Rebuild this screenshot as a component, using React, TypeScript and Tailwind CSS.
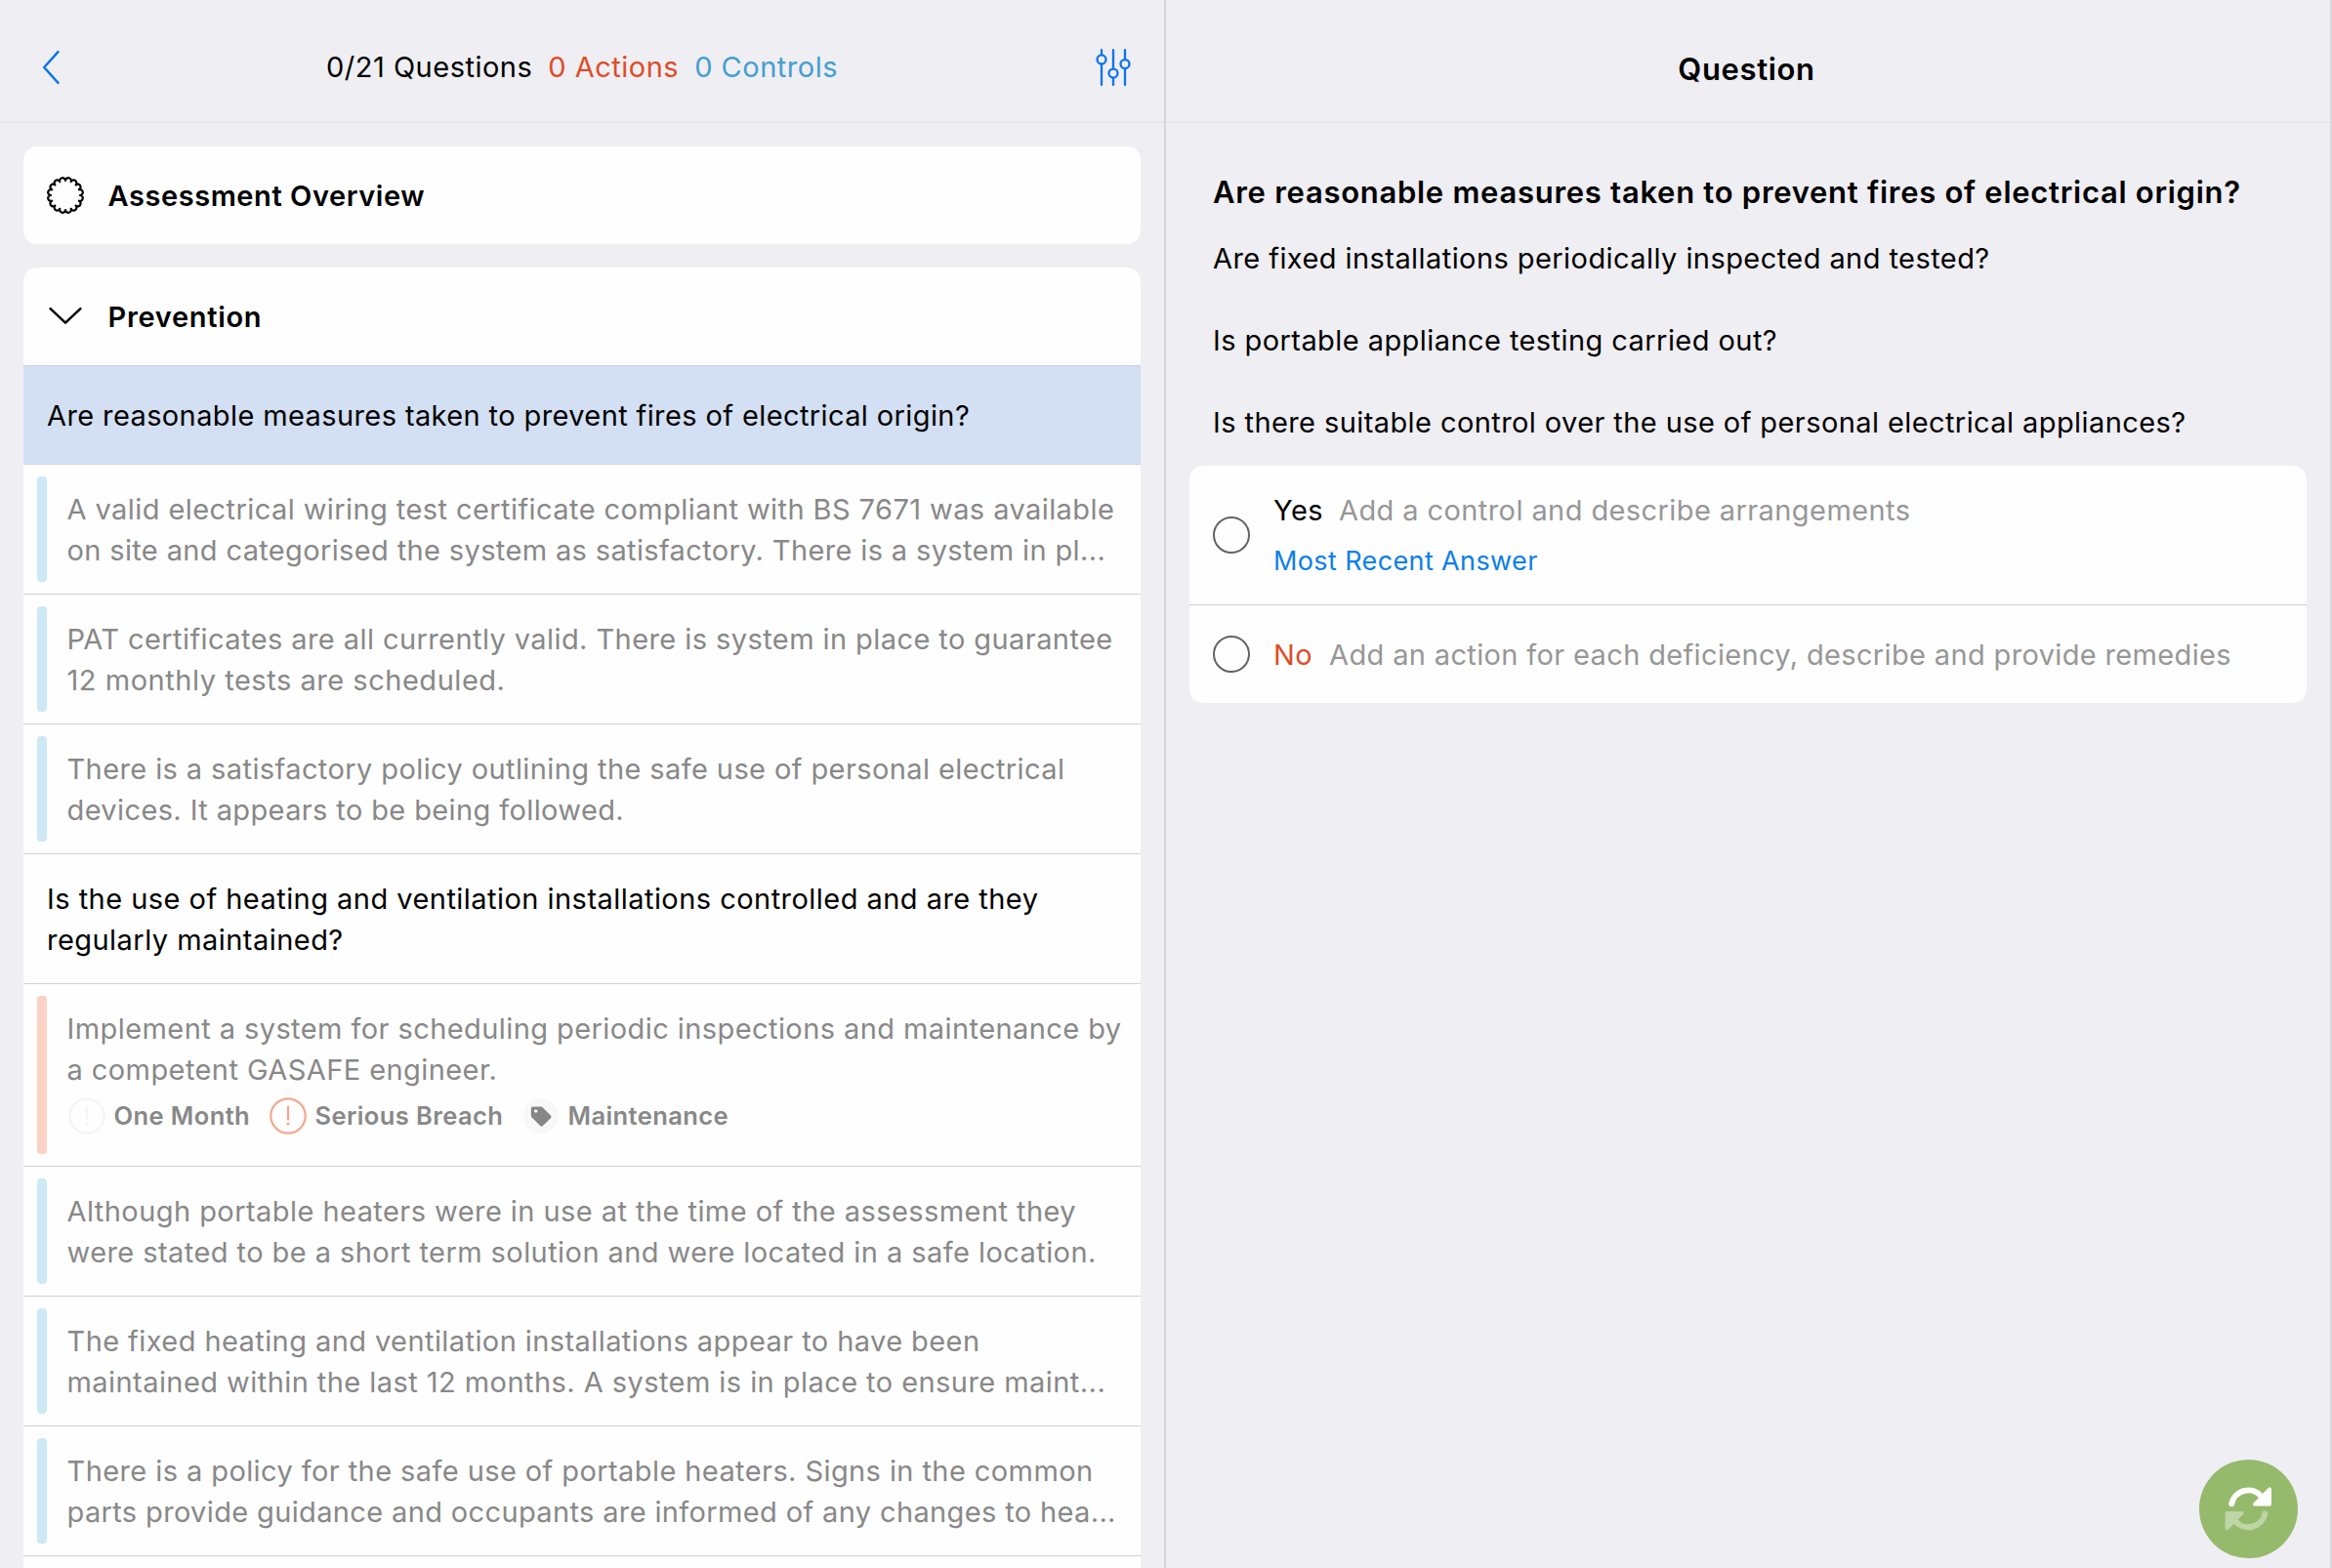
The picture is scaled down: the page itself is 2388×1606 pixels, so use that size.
import React from "react";

type Tone = "blue" | "red";

type Line = { text: string; tracking?: string };

type Finding = {
  tone: Tone;
  lines: Line[];
  tags?: boolean;
};

const electricalFindings: Finding[] = [
  {
    tone: "blue",
    lines: [
      { text: "A valid electrical wiring test certificate compliant with BS 7671 was available" },
      {
        text: "on site and categorised the system as satisfactory. There is a system in pl...",
        tracking: "tracking-[0.36px]",
      },
    ],
  },
  {
    tone: "blue",
    lines: [
      { text: "PAT certificates are all currently valid. There is system in place to guarantee" },
      { text: "12 monthly tests are scheduled.", tracking: "tracking-[0.53px]" },
    ],
  },
  {
    tone: "blue",
    lines: [
      { text: "There is a satisfactory policy outlining the safe use of personal electrical", tracking: "tracking-[0.4px]" },
      { text: "devices. It appears to be being followed.", tracking: "tracking-[0.38px]" },
    ],
  },
];

const heatingFindings: Finding[] = [
  {
    tone: "red",
    lines: [
      { text: "Implement a system for scheduling periodic inspections and maintenance by" },
      { text: "a competent GASAFE engineer." },
    ],
    tags: true,
  },
  {
    tone: "blue",
    lines: [
      { text: "Although portable heaters were in use at the time of the assessment they", tracking: "tracking-[0.44px]" },
      { text: "were stated to be a short term solution and were located in a safe location.", tracking: "tracking-[0.43px]" },
    ],
  },
  {
    tone: "blue",
    lines: [
      { text: "The fixed heating and ventilation installations appear to have been" },
      {
        text: "maintained within the last 12 months. A system is in place to ensure maint...",
        tracking: "tracking-[0.44px]",
      },
    ],
  },
  {
    tone: "blue",
    lines: [
      { text: "There is a policy for the safe use of portable heaters. Signs in the common", tracking: "tracking-[0.41px]" },
      {
        text: "parts provide guidance and occupants are informed of any changes to hea...",
        tracking: "tracking-[0.36px]",
      },
    ],
  },
];

// Scalloped ring: sixteen small arcs joined at evenly spaced valleys.
const sealPath = (() => {
  const point = (k: number) => {
    const a = (k * Math.PI) / 8;
    return `${(20 + 15 * Math.cos(a)).toFixed(2)} ${(20 + 15 * Math.sin(a)).toFixed(2)}`;
  };
  let d = `M${point(0)}`;
  for (let k = 1; k <= 16; k++) d += `A2.96 2.96 0 1 1 ${point(k)}`;
  return d + "Z";
})();

function BackIcon() {
  return (
    <svg className="h-[40px] w-[24px]" viewBox="0 0 24 40" fill="none" stroke="#0a74ec" strokeWidth="2.5" strokeLinecap="round" strokeLinejoin="round">
      <path d="M19.5 4.2 5.2 20l14.3 15.8" />
    </svg>
  );
}

function FiltersIcon() {
  return (
    <svg className="h-[40px] w-[40px]" viewBox="0 0 40 40" fill="none" stroke="#0a74ec" strokeWidth="2.3" strokeLinecap="round">
      <path d="M8 2.2v4.9M8 16.7v21.2M20 2.2v19.1M20 30.9v7M32 2.2v9.6M32 21.4v16.5" />
      <circle cx="8" cy="11.9" r="4.5" />
      <circle cx="20" cy="26.1" r="4.5" />
      <circle cx="32" cy="16.6" r="4.5" />
    </svg>
  );
}

function SealIcon() {
  return (
    <svg className="h-[40px] w-[40px]" viewBox="0 0 40 40" fill="none" stroke="#000" strokeWidth="2.2" strokeLinejoin="round">
      <path d={sealPath} />
    </svg>
  );
}

function ChevronDownIcon() {
  return (
    <svg className="h-[40px] w-[40px]" viewBox="0 0 40 40" fill="none" stroke="#000" strokeWidth="2.5" strokeLinecap="round" strokeLinejoin="round">
      <path d="M4.6 12.2 20 26.7l15.4-14.5" />
    </svg>
  );
}

function AlertIcon({ color }: { color: string }) {
  return (
    <svg className="h-[38px] w-[38px]" viewBox="0 0 38 38" fill="none" stroke={color} strokeWidth="2.2" strokeLinecap="round">
      <circle cx="19" cy="19" r="17.7" />
      <path d="M19 9.5v13" />
      <circle cx="19" cy="27" r="1.6" fill={color} stroke="none" />
    </svg>
  );
}

function TagIcon() {
  return (
    <svg className="h-[38px] w-[38px]" viewBox="0 0 38 38">
      <circle cx="19" cy="19" r="18" fill="#f8f8f8" />
      <path
        fill="#868686"
        fillRule="evenodd"
        d="M8.8 11.6a2 2 0 0 1 2-2h8.3a2.6 2.6 0 0 1 1.8.8l8 8a2 2 0 0 1 0 2.8l-7.9 7.9a2 2 0 0 1-2.8 0l-8.6-8.6a2.6 2.6 0 0 1-.8-1.8Zm4.9.6a1.8 1.8 0 1 0 0 3.6 1.8 1.8 0 0 0 0-3.6Z"
      />
    </svg>
  );
}

function SyncArrow() {
  return (
    <>
      <path d="M33.2 45.2A17.5 17.5 0 0 1 64 38" fill="none" strokeWidth="6" strokeLinecap="round" />
      <path d="M72.2 30.2v15.6H56.8Z" strokeWidth="3.6" strokeLinejoin="round" />
    </>
  );
}

function SyncIcon() {
  return (
    <svg className="h-[101px] w-[101px]" viewBox="0 0 101 101">
      <g fill="#fff" stroke="#fff">
        <SyncArrow />
      </g>
      <g fill="#bfd5a6" stroke="#bfd5a6" transform="rotate(180 50.3 50.3)">
        <SyncArrow />
      </g>
    </svg>
  );
}

function Tags() {
  return (
    <div className="mb-[2px] flex h-[52px] items-center text-[25.5px] font-semibold tracking-[0.4px]">
      <div className="ml-[1px] flex w-[206px] items-center gap-[9px]">
        <AlertIcon color="#f4f4f4" />
        <span>One Month</span>
      </div>
      <div className="flex w-[259px] items-center gap-[9px]">
        <AlertIcon color="#f2a78e" />
        <span>Serious Breach</span>
      </div>
      <div className="flex items-center gap-[9px]">
        <TagIcon />
        <span>Maintenance</span>
      </div>
    </div>
  );
}

function FindingRow({ finding }: { finding: Finding }) {
  return (
    <div className="flex border-b border-[#d0d0d2] pl-[14px] text-[#888888]">
      <div className={`my-3 w-[10px] shrink-0 rounded-[4px] ${finding.tone === "blue" ? "bg-[#cde9f5]" : "bg-[#fbd2c4]"}`} />
      <div className="pt-[25px] pb-[23px] pl-[20.5px] tracking-[0.42px]">
        {finding.lines.map((line) => (
          <p key={line.text} className={line.tracking}>
            {line.text}
          </p>
        ))}
        {finding.tags && <Tags />}
      </div>
    </div>
  );
}

function LeftPane() {
  return (
    <section className="flex h-full w-[1192px] flex-col">
      <header className="flex h-[126px] shrink-0 items-center justify-between border-b-2 border-[#e8e8ea] pt-[13px] pr-[32px] pl-[40px]">
        <div className="w-[32px]">
          <BackIcon />
        </div>
        <div className="flex gap-[16px] tracking-[0.5px]">
          <span>0/21 Questions</span>
          <span className="text-[#dd4d28]">0 Actions</span>
          <span className="text-[#439fd0]">0 Controls</span>
        </div>
        <FiltersIcon />
      </header>
      <div className="flex min-h-0 flex-1 flex-col gap-6 overflow-hidden px-6 pt-6">
        <div className="flex h-[100px] shrink-0 items-center gap-[23.5px] rounded-[14px] bg-[#fefefe] pl-[23px] font-semibold tracking-[0.57px]">
          <SealIcon />
          <h2 className="pt-[2px]">Assessment Overview</h2>
        </div>
        <div className="shrink-0 overflow-hidden rounded-t-[14px] bg-[#fefefe]">
          <div className="flex h-[101px] items-center gap-[23.5px] border-b border-[#cdd2da] pl-[23px] font-semibold tracking-[0.7px]">
            <ChevronDownIcon />
            <h2 className="pt-[2px]">Prevention</h2>
          </div>
          <div className="flex h-[101px] items-center border-b border-[#cdd2da] bg-[#d3dff2] pt-[2px] pl-6 tracking-[0.39px]">
            Are reasonable measures taken to prevent fires of electrical origin?
          </div>
          {electricalFindings.map((f) => (
            <FindingRow key={f.lines[0].text} finding={f} />
          ))}
          <div className="border-b border-[#d0d0d2] pt-[25px] pb-[23px] pl-6 tracking-[0.46px]">
            <p>Is the use of heating and ventilation installations controlled and are they</p>
            <p>regularly maintained?</p>
          </div>
          {heatingFindings.map((f) => (
            <FindingRow key={f.lines[0].text} finding={f} />
          ))}
          <div className="h-[132px]" />
        </div>
      </div>
    </section>
  );
}

function Radio() {
  return <span className="size-[38px] shrink-0 rounded-full border-2 border-[#636363]" />;
}

function RightPane() {
  return (
    <section className="relative flex h-full flex-1 flex-col border-r-2 border-l-2 border-r-[#dadadd] border-l-[#d6d6d8]">
      <header className="flex h-[126px] shrink-0 items-center justify-center border-b-2 border-[#e8e8ea] pt-[17px] pr-[3px]">
        <h1 className="text-[31px] font-semibold tracking-[0.65px]">Question</h1>
      </header>
      <div className="px-6 pt-[50px]">
        <div className="pl-6">
          <h2 className="text-[31px] font-semibold tracking-[0.72px]">
            Are reasonable measures taken to prevent fires of electrical origin?
          </h2>
          <div className="mt-[26px] flex flex-col gap-[42px]">
            <p>Are fixed installations periodically inspected and tested?</p>
            <p>Is portable appliance testing carried out?</p>
            <p className="tracking-[0.41px]">Is there suitable control over the use of personal electrical appliances?</p>
          </div>
        </div>
        <div className="mt-[23px] rounded-[14px] bg-[#fefefe]">
          <div className="flex h-[143px] items-center gap-6 border-b border-[#d0d0d2] pl-6">
            <Radio />
            <div className="flex flex-col gap-[10px] pt-[2px]">
              <div className="flex gap-[16px]">
                <span>Yes</span>
                <span className="tracking-[0.41px] text-[#979797]">Add a control and describe arrangements</span>
              </div>
              <span className="text-[27px] tracking-[0.38px] text-[#0b7fe9]">Most Recent Answer</span>
            </div>
          </div>
          <div className="flex h-[100px] items-center gap-6 pl-6">
            <Radio />
            <div className="flex gap-[17px] pt-[2px]">
              <span className="text-[#dd4d28]">No</span>
              <span className="tracking-[0.35px] text-[#979797]">Add an action for each deficiency, describe and provide remedies</span>
            </div>
          </div>
        </div>
      </div>
      <button className="absolute right-[33px] bottom-[10px] size-[101px] rounded-full bg-[#95ba6b]" aria-label="Sync">
        <SyncIcon />
      </button>
    </section>
  );
}

export default function App() {
  return (
    <main className="flex h-[1606px] w-[2388px] overflow-hidden bg-[#efeef3] font-['Inter',sans-serif] text-[29px] leading-[42px] tracking-[0.43px] whitespace-nowrap text-black">
      <LeftPane />
      <RightPane />
    </main>
  );
}
